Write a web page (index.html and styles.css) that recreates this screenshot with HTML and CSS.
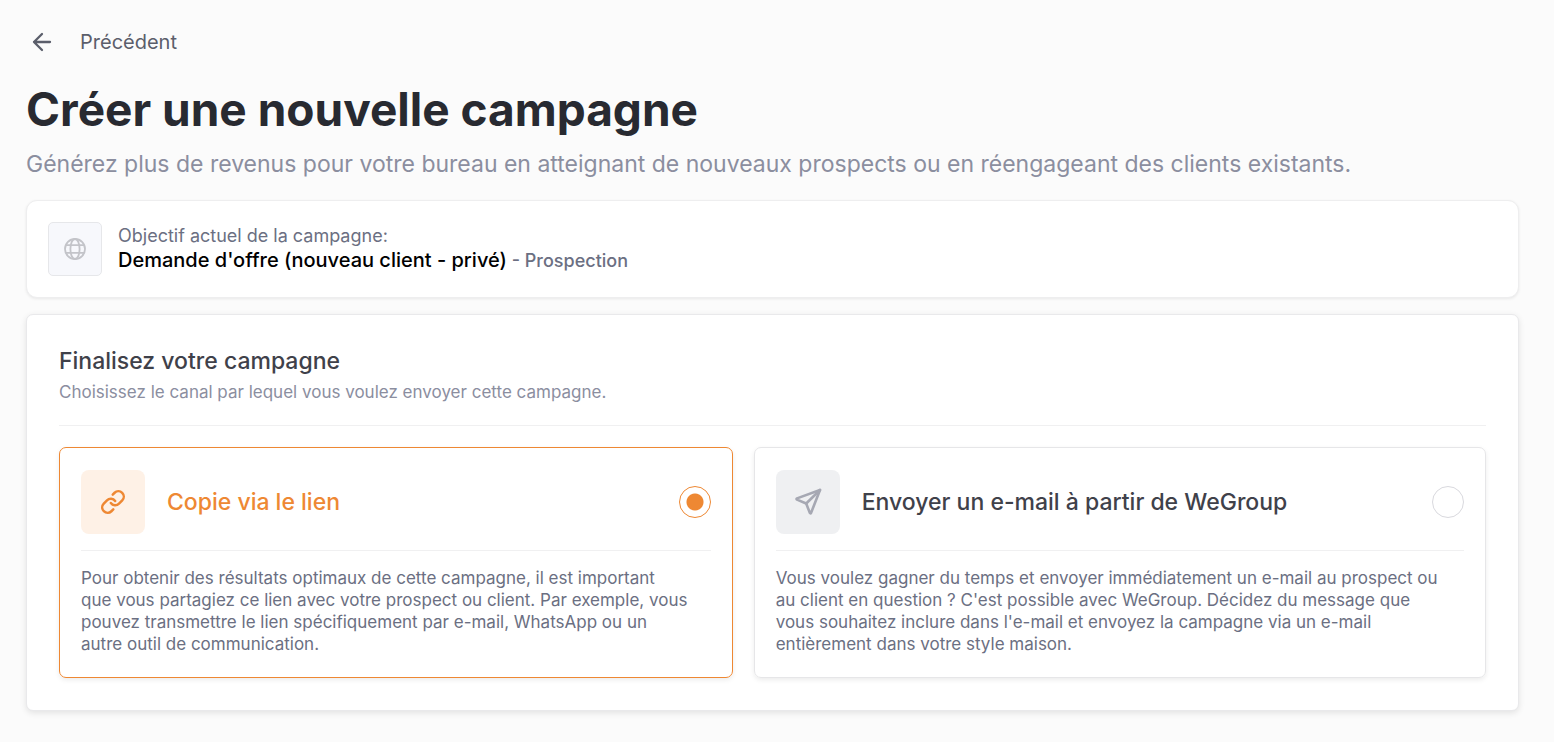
FILE: index.html
```html
<!DOCTYPE html>
<html lang="fr">
<head>
    <meta charset="UTF-8">
    <meta name="viewport" content="width=device-width, initial-scale=1.0">
    <title>Créer une nouvelle campagne</title>
    <link rel="stylesheet" href="styles.css">
</head>
<body>
    <header>
        <button type="button" class="back">
            <svg width="32" height="32" viewBox="0 0 32 32" fill="none" stroke="currentColor" stroke-width="2.3" stroke-linecap="round" stroke-linejoin="round">
                <path d="M24 16H8M16 8l-8 8 8 8"/>
            </svg>
            Précédent
        </button>
        <h1>Créer une nouvelle campagne</h1>
        <p class="subtitle">Générez plus de revenus pour votre bureau en atteignant de nouveaux prospects ou en réengageant des clients existants.</p>
    </header>

    <main>
        <section class="goal">
            <div class="goal-icon">
                <svg width="24" height="24" viewBox="0 0 24 24" fill="none" stroke="currentColor" stroke-width="1.8">
                    <circle cx="12" cy="12" r="10"/>
                    <ellipse cx="12" cy="12" rx="4.6" ry="10"/>
                    <path d="M3 8.2h18M3 15.8h18"/>
                </svg>
            </div>
            <div>
                <p class="goal-label">Objectif actuel de la campagne:</p>
                <p class="goal-name"><strong>Demande d'offre (nouveau client - privé)</strong> - Prospection</p>
            </div>
        </section>

        <form class="panel">
            <h2>Finalisez votre campagne</h2>
            <p class="panel-text">Choisissez le canal par lequel vous voulez envoyer cette campagne.</p>

            <div class="channels">
                <label class="channel" for="link">
                    <span class="channel-head">
                        <span class="channel-icon">
                            <svg width="26" height="26" viewBox="0 0 24 24" fill="none" stroke="currentColor" stroke-width="2.3" stroke-linecap="round" stroke-linejoin="round">
                                <path d="M10 13a5 5 0 0 0 7.54.54l3-3a5 5 0 0 0-7.07-7.07l-1.72 1.71"/>
                                <path d="M14 11a5 5 0 0 0-7.54-.54l-3 3a5 5 0 0 0 7.07 7.07l1.71-1.71"/>
                            </svg>
                        </span>
                        <span class="channel-title">Copie via le lien</span>
                        <input type="radio" name="channel" id="link" checked>
                    </span>
                    <span class="channel-text">Pour obtenir des résultats optimaux de cette campagne, il est important<br>
                        que vous partagiez ce lien avec votre prospect ou client. Par exemple, vous<br>
                        pouvez transmettre le lien spécifiquement par e-mail, WhatsApp ou un<br>
                        autre outil de communication.</span>
                </label>

                <label class="channel" for="email">
                    <span class="channel-head">
                        <span class="channel-icon">
                            <svg width="30" height="30" viewBox="0 0 30 30" fill="none" stroke="currentColor" stroke-width="2.6" stroke-linecap="round" stroke-linejoin="round">
                                <path d="M27 3L4 11.4q-1 .6 0 1.2l9.2 3.9 3.6 9.3q.7 1.1 1.3 0z"/>
                                <path d="M27 3L13.2 16.5"/>
                            </svg>
                        </span>
                        <span class="channel-title">Envoyer un e-mail à partir de WeGroup</span>
                        <input type="radio" name="channel" id="email">
                    </span>
                    <span class="channel-text">Vous voulez gagner du temps et envoyer immédiatement un e-mail au prospect ou<br>
                        au client en question ? C'est possible avec WeGroup. Décidez du message que<br>
                        vous souhaitez inclure dans l'e-mail et envoyez la campagne via un e-mail<br>
                        entièrement dans votre style maison.</span>
                </label>
            </div>
        </form>
    </main>
</body>
</html>
```
FILE: styles.css
```css
* {
    box-sizing: border-box;
}

body {
    margin: 0;
    padding: 24px 35px 24px 26px;
    background-color: #fbfbfb;
    font-family: Inter, "Liberation Sans", sans-serif;
    color: #6b6f82;
}

h1, h2, p {
    margin: 0;
}

.back {
    display: flex;
    align-items: center;
    gap: 22px;
    height: 36px;
    padding: 0;
    border: none;
    background: none;
    font-family: inherit;
    font-size: 20px;
    color: #5b5e6b;
    cursor: pointer;
}

h1 {
    margin-top: 19px;
    font-size: 46px;
    line-height: 60px;
    font-weight: 700;
    color: #282a31;
}

.subtitle {
    margin-top: 9px;
    font-size: 23px;
    line-height: 32px;
    color: #8b8e9f;
}

.goal {
    display: flex;
    align-items: center;
    gap: 16px;
    margin-top: 20px;
    padding: 21px;
    border: 1px solid #eeeeef;
    border-radius: 11px;
    background-color: white;
    box-shadow: 0 1px 3px rgba(0, 0, 0, 0.08);
}

.goal-icon {
    display: flex;
    align-items: center;
    justify-content: center;
    width: 54px;
    height: 54px;
    border: 1px solid #e6e7ea;
    border-radius: 5px;
    background-color: #f7f8fc;
    color: #c3c4c9;
}

.goal-label {
    font-size: 18px;
    line-height: 24px;
}

.goal-name {
    padding-bottom: 2px;
    font-size: 18px;
    line-height: 24px;
    font-weight: 500;
}

.goal-name strong {
    font-size: 20px;
    font-weight: 500;
    color: black;
}

.panel {
    margin-top: 16px;
    padding: 32px;
    border: 1px solid #e9e9eb;
    border-radius: 7px;
    background-color: white;
    box-shadow: 0 2px 6px rgba(0, 0, 0, 0.1);
}

h2 {
    font-size: 23px;
    line-height: 28px;
    font-weight: 500;
    color: #3f414a;
}

.panel-text {
    padding: 5px 0 21px;
    border-bottom: 1px solid #f0f0f1;
    font-size: 17px;
    line-height: 24px;
    color: #8b8e9f;
}

.channels {
    display: grid;
    grid-template-columns: 23fr 25fr;
    gap: 21px;
    margin-top: 21px;
}

.channel {
    padding: 22px 21px;
    border: 1px solid #e6e6e8;
    border-radius: 7px;
    box-shadow: 0 2px 5px rgba(0, 0, 0, 0.08);
    cursor: pointer;
}

.channel-head {
    display: flex;
    align-items: center;
    gap: 22px;
    padding-bottom: 16px;
    border-bottom: 1px solid #f0f0f1;
}

.channel-icon {
    display: flex;
    align-items: center;
    justify-content: center;
    width: 64px;
    height: 64px;
    border-radius: 8px;
    background-color: #eff0f2;
    color: #a6a8b3;
}

.channel-title {
    flex: 1;
    font-size: 23px;
    font-weight: 500;
    color: #3f414a;
}

.channel input {
    appearance: none;
    width: 32px;
    height: 32px;
    margin: 0;
    border: 1px solid #d9d9de;
    border-radius: 50%;
    background-color: white;
}

.channel-text {
    display: block;
    margin-top: 16px;
    font-size: 17px;
    line-height: 22px;
}

.channel:has(input:checked) {
    border-color: #ee8833;
}

.channel:has(input:checked) .channel-icon {
    background-color: #fef1e6;
    color: #ee8833;
}

.channel:has(input:checked) .channel-title {
    color: #ee8833;
}

.channel input:checked {
    border-color: #ee8833;
    background-image: radial-gradient(circle, #ee8833 8px, transparent 9px);
}
```
